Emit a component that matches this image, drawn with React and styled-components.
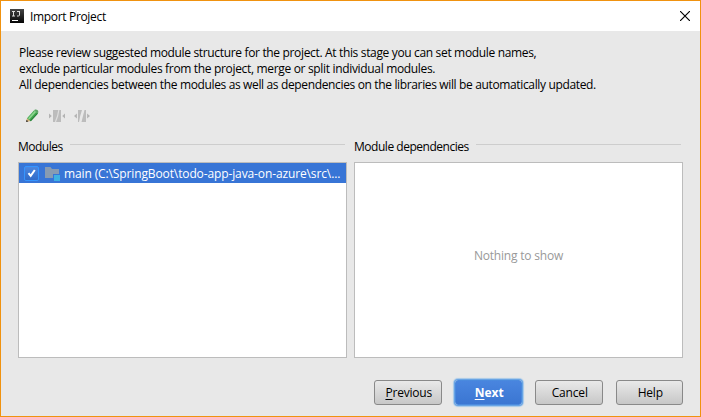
import React from "react";
import styled, { createGlobalStyle, css } from "styled-components";

const Global = createGlobalStyle`
  * { box-sizing: border-box; }
  body { margin: 0; overflow: hidden; }
`;

const Dialog = styled.main`
  width: 701px;
  height: 417px;
  display: flex;
  flex-direction: column;
  border: 1px solid #f0920f;
  background: #e8e8e8;
  color: #000;
  font: 12px/16px "Open Sans", "Noto Sans", sans-serif;
`;

const TitleBar = styled.header`
  height: 30px;
  flex: none;
  display: flex;
  align-items: center;
  padding: 0 10px 0 9px;
  background: #fff;
`;

const Title = styled.h1`
  flex: 1;
  margin: 1px 0 0 6px;
  font-size: 12px;
  font-weight: 400;
  letter-spacing: ${(p) => p.$spacing}px;
`;

const CloseButton = styled.button`
  display: flex;
  padding: 0;
  border: 0;
  background: none;
`;

const Content = styled.section`
  flex: 1;
  display: flex;
  flex-direction: column;
  padding: 14px 17px 0;
`;

const Intro = styled.div`
  height: 48px;
  padding-left: 1px;
`;

const Line = styled.p`
  margin: 0;
  white-space: nowrap;
  letter-spacing: ${(p) => p.$spacing}px;
`;

const Toolbar = styled.div`
  height: 16px;
  display: flex;
  gap: 9px;
  margin: 15px 0 0 6px;
`;

const ToolButton = styled.button`
  width: 16px;
  height: 16px;
  padding: 0;
  border: 0;
  background: none;
  svg { display: block; }
`;

const Panels = styled.div`
  display: grid;
  grid-template-columns: 329px 329px;
  column-gap: 7px;
  margin-top: 15px;
`;

const Heading = styled.h2`
  height: 16px;
  display: flex;
  gap: 7px;
  margin: 0 2px 7px 0;
  font-size: 12px;
  font-weight: 400;
  letter-spacing: ${(p) => p.$spacing}px;
  white-space: nowrap;
  &::after {
    content: "";
    flex: 1;
    height: 1px;
    margin-top: 5px;
    background: #cdcdcd;
  }
`;

const List = styled.div`
  height: 196px;
  border: 1px solid #bcbcbc;
  background: #fff;
`;

const ModuleRow = styled.div`
  height: 20px;
  display: flex;
  align-items: center;
  padding-left: 5px;
  background: #3875d6;
  color: #fff;
  white-space: nowrap;
`;

const Checkbox = styled.span`
  width: 15px;
  height: 15px;
  flex: none;
  margin-right: 5px;
  border: 1px solid #3595ff;
  border-radius: 2px;
  background: linear-gradient(#4b86df, #316bc8);
  svg { display: block; }
`;

const ModuleName = styled.span`
  margin: 2px 0 0 4px;
  letter-spacing: ${(p) => p.$spacing}px;
`;

const Empty = styled.div`
  padding-top: 85px;
  text-align: center;
  color: #999;
  letter-spacing: ${(p) => p.$spacing}px;
`;

const Footer = styled.footer`
  display: flex;
  gap: 13px;
  margin: 22px 0 0 356px;
`;

const Button = styled.button`
  width: 68px;
  height: 25px;
  padding: 1px 0 0 2px;
  border: 1px solid #898989;
  border-radius: 3px;
  background: linear-gradient(#e9e9e9, #c7c7c7);
  color: #000;
  font: inherit;
  letter-spacing: ${(p) => p.$spacing || 0}px;
  ${(p) =>
    p.$primary &&
    css`
      border-color: #4a8ade;
      background: linear-gradient(#4985df, #3b76d2);
      box-shadow: 0 0 0 1px #68a4e5, 0 0 1px 2px #a6c8e8;
      color: #fff;
      font-weight: 700;
    `}
`;

const Mnemonic = styled.span`
  text-decoration: underline;
  text-underline-offset: 2px;
  text-decoration-thickness: 1px;
  text-decoration-skip-ink: none;
`;

function AppIcon() {
  return (
    <svg width="14" height="14" viewBox="0 0 14 14">
      <defs>
        <linearGradient id="app-bg" x2="0" y2="1">
          <stop stopColor="#444" />
          <stop offset="1" stopColor="#050505" />
        </linearGradient>
      </defs>
      <path d="M0 0h14v14H0z" fill="url(#app-bg)" />
      <path d="M2 2.5h3M3.5 2v5M2 7h3M7 2.5h3M9.5 2v4q0 1-1.2 1H7" fill="none" stroke="#ddd" />
      <path d="M2 11h6v1H2z" fill="#fff" />
    </svg>
  );
}

function CloseIcon() {
  return (
    <svg width="10" height="10" viewBox="0 0 10 10">
      <path d="M0 0l10 10M10 0L0 10" stroke="#000" strokeWidth="1.15" />
    </svg>
  );
}

function PencilIcon() {
  return (
    <svg width="16" height="16" viewBox="0 0 16 16">
      <path d="M2 14l1.1-4 3.7 3.1z" fill="#d9b27b" />
      <path d="M3 10.2l7.2-8 3.8 3-7.2 8z" fill="#42a64f" />
      <path d="M4 10.2l6.8-7.4 1.3 1.1L5.3 11.4z" fill="#8bd58f" />
      <path d="M6 12.6l7-7.4 1 .4-7.2 7.6z" fill="#267e39" />
      <path d="M10.2 2.2l.8-.6q1.2-.5 2.4.5t.9 2.3l-.5.8z" fill="#5ca566" />
      <path d="M2 14l.6-2.2 1.8 1.6z" fill="#333" />
    </svg>
  );
}

function MergeIcon() {
  return (
    <svg width="16" height="16" viewBox="0 0 16 16">
      <path d="M0 5.5v5L2.8 8zM16 5.5v5L13.2 8z" fill="#b3b3b3" />
      <path d="M4 2h8v12H4z" fill="#bcbcbc" />
      <path d="M9.8 2L8.6 8 6.4 14" fill="none" stroke="#dedede" strokeWidth="1.2" />
    </svg>
  );
}

function SplitIcon() {
  return (
    <svg width="16" height="16" viewBox="0 0 16 16">
      <path d="M2.9 5.5v5L0 8zM13.1 5.5v5L16 8z" fill="#b3b3b3" />
      <path d="M4 2h4L6.2 8 5 14H4zM10.5 2H12v12H7.5L9 8z" fill="#bcbcbc" />
    </svg>
  );
}

function CheckIcon() {
  return (
    <svg width="13" height="13" viewBox="0 0 13 13">
      <path d="M3.5 6.2l2.2 2.7L9.8 3" fill="none" stroke="#fff" strokeWidth="2" />
    </svg>
  );
}

function FolderIcon() {
  return (
    <svg width="16" height="16" viewBox="0 0 16 16">
      <path d="M1 2h5.5L8 4h7v5H9v4H1z" fill="#879bb2" />
      <path d="M10 10h6v6h-6z" fill="#3eb1e2" />
    </svg>
  );
}

export default function App() {
  return (
    <>
      <Global />
      <Dialog>
        <TitleBar>
          <AppIcon />
          <Title $spacing={-0.33}>Import Project</Title>
          <CloseButton aria-label="Close"><CloseIcon /></CloseButton>
        </TitleBar>
        <Content>
          <Intro>
            <Line $spacing={-0.34}>Please review suggested module structure for the project. At this stage you can set module names,</Line>
            <Line $spacing={-0.33}>exclude particular modules from the project, merge or split individual modules.</Line>
            <Line $spacing={-0.355}>All dependencies between the modules as well as dependencies on the libraries will be automatically updated.</Line>
          </Intro>
          <Toolbar>
            <ToolButton aria-label="Rename"><PencilIcon /></ToolButton>
            <ToolButton aria-label="Merge" disabled><MergeIcon /></ToolButton>
            <ToolButton aria-label="Split" disabled><SplitIcon /></ToolButton>
          </Toolbar>
          <Panels>
            <section>
              <Heading $spacing={-0.5}>Modules</Heading>
              <List>
                <ModuleRow>
                  <Checkbox role="checkbox" aria-checked="true"><CheckIcon /></Checkbox>
                  <FolderIcon />
                  <ModuleName $spacing={-0.12}>{"main (C:\\SpringBoot\\todo-app-java-on-azure\\src\\..."}</ModuleName>
                </ModuleRow>
              </List>
            </section>
            <section>
              <Heading $spacing={-0.47}>Module dependencies</Heading>
              <List><Empty $spacing={-0.2}>Nothing to show</Empty></List>
            </section>
          </Panels>
          <Footer>
            <Button $spacing={-0.2}><Mnemonic>P</Mnemonic>revious</Button>
            <Button $primary><Mnemonic>N</Mnemonic>ext</Button>
            <Button $spacing={-0.15}>Cancel</Button>
            <Button $spacing={-0.2}>Help</Button>
          </Footer>
        </Content>
      </Dialog>
    </>
  );
}
